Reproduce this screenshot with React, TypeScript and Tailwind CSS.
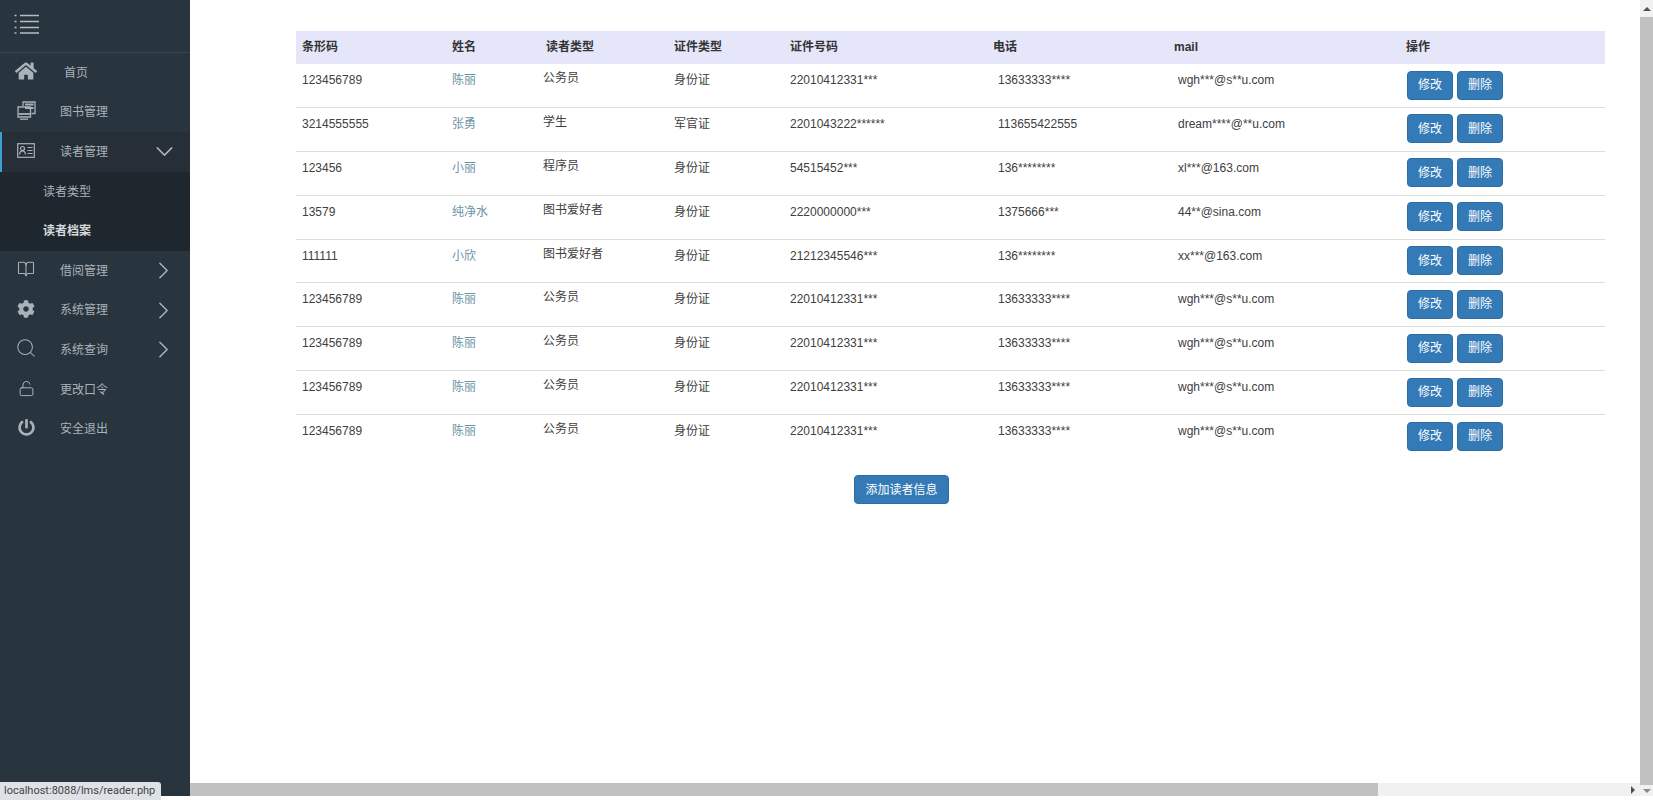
import React from 'react';
import { ChevronDown, ChevronRight, BookOpen, Search, LockOpen } from 'lucide-react';
import { FaHome, FaCog, FaPowerOff } from 'react-icons/fa';

const cols = 'grid grid-cols-[150px_94px_128px_116px_203px_181px_232px_1fr]';

interface Reader {
  code: string;
  name: string;
  type: string;
  cert: string;
  certNo: string;
  phone: string;
  mail: string;
}

const chen: Reader = {
  code: '123456789',
  name: '陈丽',
  type: '公务员',
  cert: '身份证',
  certNo: '22010412331***',
  phone: '13633333****',
  mail: 'wgh***@s**u.com',
};

const readers: Reader[] = [
  chen,
  { code: '3214555555', name: '张勇', type: '学生', cert: '军官证', certNo: '2201043222******', phone: '113655422555', mail: 'dream****@**u.com' },
  { code: '123456', name: '小丽', type: '程序员', cert: '身份证', certNo: '54515452***', phone: '136********', mail: 'xl***@163.com' },
  { code: '13579', name: '纯净水', type: '图书爱好者', cert: '身份证', certNo: '2220000000***', phone: '1375666***', mail: '44**@sina.com' },
  { code: '111111', name: '小欣', type: '图书爱好者', cert: '身份证', certNo: '21212345546***', phone: '136********', mail: 'xx***@163.com' },
  chen,
  chen,
  chen,
  chen,
];

function MenuIcon() {
  return (
    <svg width="25" height="20" viewBox="0 0 25 20" className="text-[#b4bdc3]" fill="none" stroke="currentColor" strokeWidth="1.5">
      <path d="M6 1.5h19M6 7.5h19M6 13.5h19M6 19h19" />
      <path d="M0.5 1.5h2M0.5 7.5h2M0.5 13.5h2M0.5 19h2" />
    </svg>
  );
}

function BooksIcon() {
  return (
    <svg width="19" height="19" viewBox="0 0 19 19" fill="none" stroke="currentColor" strokeWidth="1.3">
      <path d="M6 5V1h12v11.5h-3.5" />
      <path d="M1 6h12.5v10H1z" />
      <path d="M8 3.5h8.5M8 7h8.5" strokeWidth="1.8" />
      <path d="M1.5 13h11.5" strokeWidth="1.8" />
      <path d="M3 18.2h8" />
    </svg>
  );
}

function CardIcon() {
  return (
    <svg width="18" height="15" viewBox="0 0 18 15" fill="none" stroke="currentColor" strokeWidth="1.2">
      <rect x="0.7" y="0.7" width="16.6" height="13.6" />
      <circle cx="5.5" cy="5.5" r="2" />
      <path d="M2.5 11.5c.4-2.6 1.6-3.6 3-3.6s2.6 1 3 3.6M10.5 4.5h5M10.5 7.5h5M10.5 10.5h5" />
    </svg>
  );
}

function SideItem({ icon, label, arrow, active, textClass }: {
  icon: React.ReactNode;
  label: string;
  arrow?: 'right' | 'down';
  active?: boolean;
  textClass?: string;
}) {
  return (
    <div className={`relative flex h-[39.6px] items-center ${active ? 'bg-[#262f38]' : ''}`}>
      {active && <div className="absolute left-0 top-0 h-full w-[2px] bg-[#3d9fd0]" />}
      <div className="flex w-[60px] shrink-0 justify-center pr-[8px] pb-[3px]">{icon}</div>
      <span className={`flex-1 text-[12px] ${textClass ?? ''}`}>{label}</span>
      {arrow === 'right' && <ChevronRight size={29} strokeWidth={1.3} className="mr-[12px]" />}
      {arrow === 'down' && <ChevronDown size={29} strokeWidth={1.3} className="mr-[11px]" />}
    </div>
  );
}

function Sidebar() {
  return (
    <aside className="flex w-[190px] shrink-0 flex-col bg-[#28343e] text-[#a9b2b9]">
      <div className="flex h-[53px] shrink-0 items-center border-b border-[#3a4650] pb-[4px] pl-[14px]">
        <MenuIcon />
      </div>
      <SideItem icon={<FaHome size={22} />} label="首页" textClass="pl-[4px]" />
      <SideItem icon={<BooksIcon />} label="图书管理" />
      <SideItem icon={<CardIcon />} label="读者管理" arrow="down" active />
      <div className="flex h-[79.2px] shrink-0 flex-col bg-[#1f272e]">
        <div className="flex h-[39.6px] items-center pl-[43px] text-[12px]">读者类型</div>
        <div className="flex h-[39.6px] items-center pl-[43px] text-[12px] font-bold text-[#d5d9dc]">读者档案</div>
      </div>
      <SideItem icon={<BookOpen size={18} strokeWidth={1.4} />} label="借阅管理" arrow="right" />
      <SideItem icon={<FaCog size={18} />} label="系统管理" arrow="right" />
      <SideItem icon={<Search size={22} strokeWidth={1.1} />} label="系统查询" arrow="right" />
      <SideItem icon={<LockOpen size={17} strokeWidth={1.4} />} label="更改口令" />
      <SideItem icon={<FaPowerOff size={17} />} label="安全退出" />
    </aside>
  );
}

function ReaderRow({ r, last }: { r: Reader; last: boolean }) {
  return (
    <div className={`${cols} h-[43.9px] pl-[6px] text-[12px] text-[#404040] ${last ? '' : 'border-b border-[#dddddd]'}`}>
      <span className="pt-[7px]">{r.code}</span>
      <span className="pt-[7px] text-[#6b93a6]">{r.name}</span>
      <span className="-ml-[3px] pt-[5px]">{r.type}</span>
      <span className="pt-[7px]">{r.cert}</span>
      <span className="pt-[7px]">{r.certNo}</span>
      <span className="ml-[5px] pt-[7px]">{r.phone}</span>
      <span className="ml-[4px] pt-[7px]">{r.mail}</span>
      <div className="ml-px flex gap-[4px] pt-[6.5px]">
        <button className="h-[29px] w-[46px] rounded border border-[#2e6da4] bg-[#337ab7] text-[12px] text-white">修改</button>
        <button className="h-[29px] w-[46px] rounded border border-[#2e6da4] bg-[#337ab7] text-[12px] text-white">删除</button>
      </div>
    </div>
  );
}

function ReaderTable() {
  return (
    <div className="min-h-0 flex-1 overflow-hidden pt-[31px] pl-[106px] pr-[35px]">
      <div className={`${cols} h-[33px] items-center bg-[#e6e6fa] pb-px pl-[6px] text-[12px] font-bold text-[#333333]`}>
        <span>条形码</span>
        <span>姓名</span>
        <span>读者类型</span>
        <span>证件类型</span>
        <span>证件号码</span>
        <span>电话</span>
        <span>mail</span>
        <span>操作</span>
      </div>
      {readers.map((r, i) => (
        <ReaderRow key={i} r={r} last={i === readers.length - 1} />
      ))}
      <div className="mt-[16px] flex pl-[558px]">
        <button className="h-[29px] w-[95px] rounded border border-[#2e6da4] bg-[#337ab7] text-[12px] text-white">添加读者信息</button>
      </div>
    </div>
  );
}

function VerticalScrollbar() {
  return (
    <div className="flex w-[13px] shrink-0 flex-col bg-[#f1f1f1]">
      <div className="flex h-[17px] shrink-0 items-center justify-center">
        <div className="h-0 w-0 border-x-[4px] border-b-[4px] border-x-transparent border-b-[#505050]" />
      </div>
      <div className="flex-1 bg-[#c1c1c1]" />
      <div className="flex h-[11px] shrink-0 items-center justify-center">
        <div className="h-0 w-0 border-x-[4px] border-t-[4px] border-x-transparent border-t-[#8a8a8a]" />
      </div>
    </div>
  );
}

export default function App() {
  return (
    <div className="relative flex h-screen flex-col overflow-hidden bg-white font-['Liberation_Sans','Noto_Sans_CJK_SC',sans-serif]">
      <div className="flex min-h-0 flex-1">
        <Sidebar />
        <div className="flex min-w-0 flex-1 flex-col">
          <ReaderTable />
          <div className="flex h-[13px] shrink-0 items-center bg-[#f1f1f1]">
            <div className="h-full w-[1188px] bg-[#c1c1c1]" />
            <div className="ml-auto mr-[5px] h-0 w-0 border-y-[4px] border-l-[4px] border-y-transparent border-l-[#505050]" />
          </div>
        </div>
        <VerticalScrollbar />
      </div>
      <div className="h-[4px] shrink-0 bg-white" />
      <div className="absolute bottom-0 left-0 flex h-[18px] w-[161px] items-center rounded-tr-[3px] bg-[#dee1e6] pl-[4px] font-['Roboto',sans-serif] text-[11px] text-[#444]">
        localhost:8088/lms/reader.php
      </div>
    </div>
  );
}
